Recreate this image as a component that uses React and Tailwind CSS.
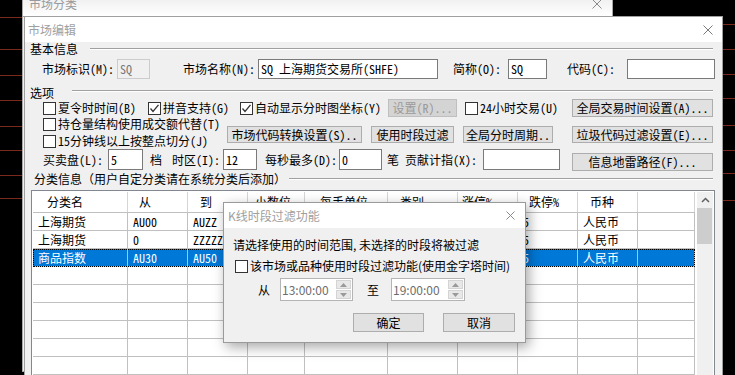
import React from 'react';

const SONG = "font-['Noto_Sans_Mono_CJK_SC','Noto_Sans_CJK_SC',monospace]";
const YAHEI = "font-['Noto_Sans_CJK_SC',sans-serif]";

function XIcon({ size = 10, color = '#777' }) {
  return (
    <svg width={size} height={size} viewBox={`0 0 ${size} ${size}`} className="shrink-0">
      <line x1="0.5" y1="0.5" x2={size - 0.5} y2={size - 0.5} stroke={color} strokeWidth="1" />
      <line x1={size - 0.5} y1="0.5" x2="0.5" y2={size - 0.5} stroke={color} strokeWidth="1" />
    </svg>
  );
}

function Box({ checked }) {
  return (
    <span className="w-[13px] h-[13px] border border-[#333333] bg-white flex items-center justify-center shrink-0">
      {checked && (
        <svg width="11" height="11" viewBox="0 0 11 11">
          <polyline points="1.5,5.5 4,8.5 9.5,1.8" fill="none" stroke="#333333" strokeWidth="1.3" />
        </svg>
      )}
    </span>
  );
}

function CheckItem({ checked, label, className = '' }) {
  return (
    <div className={`flex items-center gap-[2px] shrink-0 whitespace-nowrap ${className}`}>
      <Box checked={checked} />
      <span>{label}</span>
    </div>
  );
}

function Btn({ children, className = '', disabled }) {
  const look = disabled
    ? 'border-[#bfbfbf] bg-[#d4d4d4] text-[#9a9a9a]'
    : 'border-[#adadad] bg-[#e1e1e1] text-black';
  return (
    <div className={`flex items-center justify-center border shrink-0 whitespace-nowrap ${look} ${className}`}>
      {children}
    </div>
  );
}

function Field({ children, className = '', disabled }) {
  const look = disabled
    ? 'border-[#cccccc] bg-[#f0f0f0] text-[#7a7a7a]'
    : 'border-[#7a7a7a] bg-white text-black';
  return (
    <div className={`flex items-center border pl-[2px] shrink-0 whitespace-nowrap overflow-hidden ${look} ${className}`}>
      {children}
    </div>
  );
}

function GroupLine({ className = '' }) {
  return <div className={`flex-1 h-0 border-t border-b border-t-[#a0a0a0] border-b-white ${className}`} />;
}

function Spinner({ value, className = '' }) {
  return (
    <div className={`h-[23px] border border-[#b4b4b4] bg-white flex items-stretch shrink-0 ${className}`}>
      <div className="flex-1 flex items-center pl-[1px] text-[#6d6d6d]">{value}</div>
      <div className="w-[17px] flex flex-col gap-[1px] p-[1px]">
        <div className="flex-1 bg-[#e8e8e8] border border-[#d4d4d4] flex items-center justify-center">
          <svg width="7" height="4" viewBox="0 0 7 4"><polygon points="0,4 3.5,0 7,4" fill="#9a9a9a" /></svg>
        </div>
        <div className="flex-1 bg-[#e8e8e8] border border-[#d4d4d4] flex items-center justify-center">
          <svg width="7" height="4" viewBox="0 0 7 4"><polygon points="0,0 3.5,4 7,0" fill="#9a9a9a" /></svg>
        </div>
      </div>
    </div>
  );
}

const GRID = 'grid grid-cols-[95px_60px_60px_57px_83px_70px_60px_60px_60px_57px]';
const headers = ['分类名', '从', '到', '小数位', '每手单位', '类别', '涨停%', '跌停%', '币种', ''];
const headerPad = ['pl-[14px]', 'pl-[11px]', 'pl-[12px]', 'pl-[7px]', 'pl-[15px]', 'pl-[12px]', 'pl-[4px]', 'pl-[11px]', 'pl-[12px]', ''];
const rows = [
  ['上海期货', 'AU00', 'AUZZ', '', '', '', '', '5', '人民币', ''],
  ['上海期货', '0', 'ZZZZZZZZ', '', '', '', '', '5', '人民币', ''],
  ['商品指数', 'AU30', 'AU50', '', '', '', '', '5', '人民币', ''],
  ['', '', '', '', '', '', '', '', '', ''],
  ['', '', '', '', '', '', '', '', '', ''],
  ['', '', '', '', '', '', '', '', '', ''],
  ['', '', '', '', '', '', '', '', '', ''],
  ['', '', '', '', '', '', '', '', '', ''],
  ['', '', '', '', '', '', '', '', '', ''],
];

export default function App() {
  const leftLines = [17, 49, 75, 100, 126, 150, 175, 198];
  const rightLines = [24, 49, 74, 98, 125, 150, 173, 200];
  return (
    <div className="relative w-[735px] h-[375px] bg-black overflow-hidden">
      <svg className="absolute left-0 top-0" width="735" height="375">
        {leftLines.map((y) => (
          <line key={'l' + y} x1="0" y1={y + 0.5} x2="22" y2={y + 0.5} stroke="#7a2a1c" strokeWidth="1" />
        ))}
        {rightLines.map((y) => (
          <line key={'r' + y} x1="723" y1={y + 0.5} x2="735" y2={y + 0.5} stroke="#7a2a1c" strokeWidth="1" />
        ))}
      </svg>

      {/* outer window 市场分类 */}
      <div className="absolute left-[22px] top-[-14px] w-[591px] h-[386px] border border-[#a8a8a8] bg-[#f0f0f0]">
        <div className={`h-[30px] bg-gradient-to-b from-[#e6e6e6] to-white border-b border-[#a0a0a0] flex items-center justify-between pt-[4px] pl-[6px] pr-[10px] ${YAHEI} text-[12px]`}>
          <span className="text-[#9a9a9a]">市场分类</span>
          <XIcon size={10} color="#8a8a8a" />
        </div>
      </div>

      {/* inner dialog 市场编辑 */}
      <div className={`absolute left-[24px] top-[16px] w-[699px] h-[370px] border border-[#a0a0a0] bg-[#f0f0f0] flex flex-col ${SONG} text-[12px] leading-[14px] text-black`}>
        <div className={`h-[25px] bg-white flex items-center justify-between pl-[3px] pr-[9px] shrink-0 ${YAHEI}`}>
          <span className="text-[#a0a0a0] text-[12px]">市场编辑</span>
          <XIcon size={10} color="#7a7a7a" />
        </div>

        <div className="flex flex-col pl-[5px] pr-[9px]">
          {/* 基本信息 */}
          <div className="h-[14px] flex items-center">
            <span className="shrink-0">基本信息</span>
            <GroupLine className="ml-[12px]" />
          </div>
          <div className="mt-[3px] h-[20px] flex items-center pl-[12px]">
            <span className="w-[75px] shrink-0">市场标识(M):</span>
            <Field disabled className="w-[33px] h-[20px]">SQ</Field>
            <span className="ml-[33px] w-[75px] shrink-0">市场名称(N):</span>
            <Field className="w-[180px] h-[20px]">SQ 上海期货交易所(SHFE)</Field>
            <span className="ml-[15px] w-[55px] shrink-0">简称(O):</span>
            <Field className="w-[39px] h-[20px]">SQ</Field>
            <span className="ml-[20px] w-[60px] shrink-0">代码(C):</span>
            <Field className="w-[88px] h-[20px]"></Field>
          </div>

          {/* 选项 */}
          <div className="mt-[7px] h-[13px] flex">
            <span className="shrink-0 self-center">选项</span>
            <GroupLine className="ml-[18px] mt-[4px]" />
          </div>
          <div className="h-[18px] flex items-center pl-[13px]">
            <CheckItem label="夏令时时间(B)" className="w-[105px]" />
            <CheckItem checked label="拼音支持(G)" className="w-[92px]" />
            <CheckItem checked label="自动显示分时图坐标(Y)" className="w-[148px]" />
            <Btn disabled className="w-[69px] h-[18px]">设置(R)...</Btn>
            <CheckItem label="24小时交易(U)" className="ml-[8px] w-[107px]" />
            <Btn className="w-[141px] h-[18px]">全局交易时间设置(A)...</Btn>
          </div>
          <div className="h-[30px] flex pl-[13px]">
            <div className="w-[184px] flex flex-col shrink-0">
              <CheckItem label="持仓量结构使用成交额代替(T)" className="h-[14px]" />
              <CheckItem label="15分钟线以上按整点切分(J)" className="mt-[3px] h-[14px]" />
            </div>
            <div className="flex items-start mt-[9px]">
              <Btn className="w-[135px] h-[17px]">市场代码转换设置(S)..</Btn>
              <Btn className="ml-[9px] w-[83px] h-[17px]">使用时段过滤</Btn>
              <Btn className="ml-[9px] w-[90px] h-[17px]">全局分时周期..</Btn>
              <Btn className="ml-[19px] w-[141px] h-[17px]">垃圾代码过滤设置(E)...</Btn>
            </div>
          </div>
          <div className="mt-[2px] h-[22px] flex items-start pl-[13px]">
            <span className="w-[65px] h-[21px] flex items-center shrink-0">买卖盘(L):</span>
            <Field className="w-[35px] h-[21px]">5</Field>
            <span className="ml-[7px] w-[22px] h-[21px] flex items-center shrink-0">档</span>
            <span className="w-[51px] h-[21px] flex items-center shrink-0">时区(I):</span>
            <Field className="w-[34px] h-[21px]">12</Field>
            <span className="ml-[8px] w-[74px] h-[21px] flex items-center shrink-0">每秒最多(D):</span>
            <Field className="w-[43px] h-[21px]">0</Field>
            <span className="ml-[5px] w-[18px] h-[21px] flex items-center shrink-0">笔</span>
            <span className="w-[78px] h-[21px] flex items-center shrink-0">贡献计指(X):</span>
            <Field className="w-[77px] h-[21px]"></Field>
            <Btn className="ml-[12px] mt-[4px] w-[141px] h-[18px]">信息地雷路径(F)...</Btn>
          </div>

          {/* 分类信息 */}
          <div className="mt-[1px] h-[13px] flex items-center pl-[4px]">
            <span className="shrink-0">分类信息（用户自定分类请在系统分类后添加）</span>
            <GroupLine className="ml-[3px]" />
          </div>

          {/* table */}
          <div className="mt-[5px] ml-[1px] w-[684px] h-[200px] shrink-0 border border-[#828790] p-[1px] bg-white flex">
            <div className="w-[662px] flex flex-col shrink-0">
              <div className={`${GRID} h-[21px] border-b border-[#c0c0c0]`}>
                {headers.map((h, i) => (
                  <div key={i} className={`h-full border-r border-[#d5d5d5] flex items-center whitespace-nowrap overflow-hidden ${headerPad[i]}`}>
                    {h}
                  </div>
                ))}
              </div>
              {rows.map((r, ri) => {
                const sel = ri === 2;
                return (
                  <div
                    key={ri}
                    className={`${GRID} h-[18px] border-b border-[#c0c0c0] ${sel ? 'bg-[#0078d7] text-white outline-1 outline-dotted outline-black -outline-offset-1' : ''}`}
                  >
                    {r.map((c, ci) => (
                      <div key={ci} className="h-full border-r border-[#c0c0c0] pl-[5px] flex items-center whitespace-nowrap overflow-hidden">
                        {c}
                      </div>
                    ))}
                  </div>
                );
              })}
            </div>
            <div className="ml-[2px] w-[16px] bg-[#f0f0f0] flex flex-col shrink-0">
              <div className="h-[16px] flex items-center justify-center">
                <svg width="9" height="6" viewBox="0 0 9 6">
                  <polyline points="1,5 4.5,1.5 8,5" fill="none" stroke="#606060" strokeWidth="1.5" />
                </svg>
              </div>
              <div className="h-[36px] w-[15px] bg-[#cdcdcd]" />
            </div>
          </div>
        </div>
      </div>

      {/* K线时段过滤功能 dialog */}
      <div className={`absolute left-[223px] top-[202px] w-[303px] h-[141px] border border-[#9a9a9a] bg-[#f0f0f0] shadow-[3px_4px_12px_rgba(0,0,0,0.35)] flex flex-col ${YAHEI} text-[12px] leading-[14px] text-black`}>
        <div className="h-[25px] bg-white flex items-center justify-between pl-[4px] pr-[10px] shrink-0">
          <span className="text-[#a0a0a0]">K线时段过滤功能</span>
          <XIcon size={9} color="#8a8a8a" />
        </div>
        <div className="flex flex-col pl-[9px]">
          <div className="mt-[9px] h-[16px] flex items-center whitespace-nowrap">请选择使用的时间范围, 未选择的时段将被过滤</div>
          <div className="mt-[6px] h-[14px] flex items-center gap-[2px] pl-[2px] whitespace-nowrap">
            <Box />
            <span>该市场或品种使用时段过滤功能(使用金字塔时间)</span>
          </div>
          <div className="mt-[5px] h-[23px] flex items-center pl-[25px]">
            <span className="shrink-0">从</span>
            <Spinner value="13:00:00" className="ml-[10px] w-[73px]" />
            <span className="ml-[14px] shrink-0">至</span>
            <Spinner value="19:00:00" className="ml-[12px] w-[74px]" />
          </div>
          <div className="mt-[12px] h-[19px] flex pl-[120px]">
            <Btn className="w-[71px] h-[19px]">确定</Btn>
            <Btn className="ml-[19px] w-[72px] h-[19px]">取消</Btn>
          </div>
        </div>
      </div>
    </div>
  );
}
